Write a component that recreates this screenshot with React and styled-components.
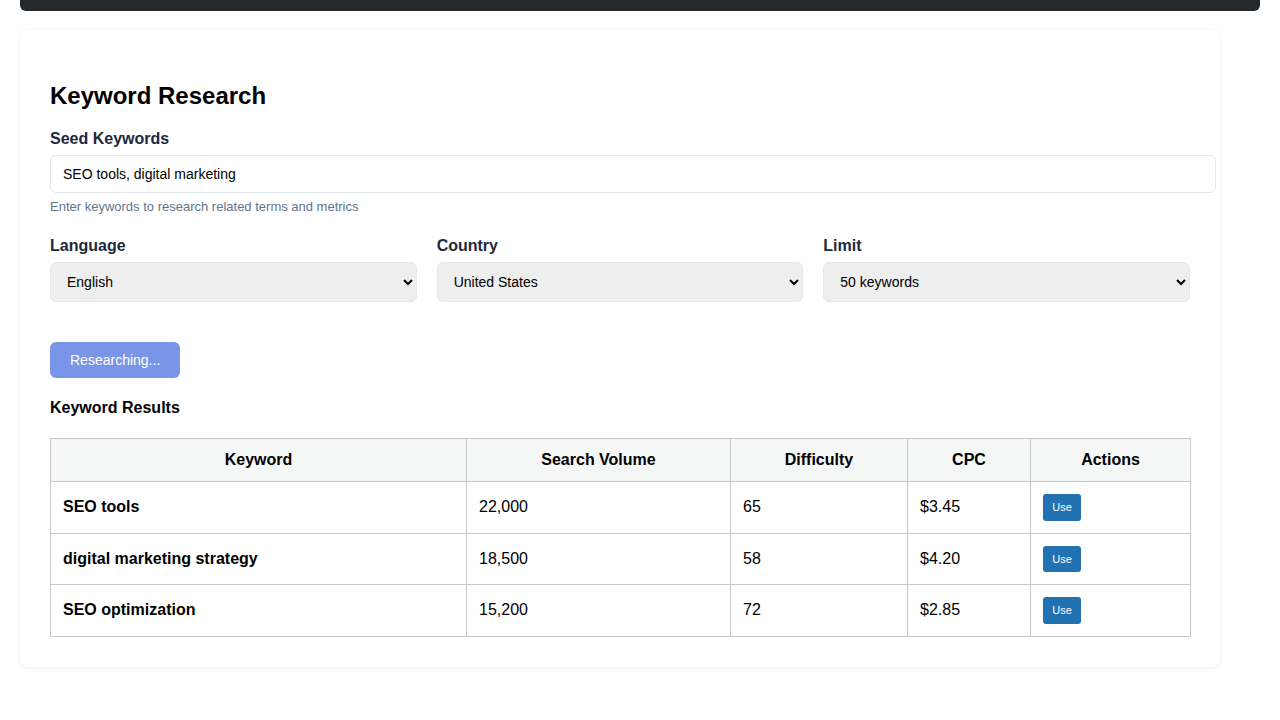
import React from "react";
import styled, { createGlobalStyle } from "styled-components";

const Global = createGlobalStyle`
  * { box-sizing: content-box; }
  html, body { margin: 0; padding: 0; background: #fff; }
  body { font-family: "Liberation Sans", Arial, sans-serif; color: #000; }
`;

const Page = styled.div`
  padding: 0 20px 20px;
`;

const TopBar = styled.div`
  height: 11px;
  background: #23282d;
  border-radius: 0 0 6px 6px;
`;

const Card = styled.div`
  width: 1140px;
  margin-top: 19px;
  padding: 30px;
  background: #fff;
  border-radius: 8px;
  box-shadow: 0 1px 4px rgba(0, 0, 0, 0.08);
`;

const Title = styled.h2`
  font-size: 24px;
  font-weight: 700;
  margin: 22px 0 19px;
  line-height: 28px;
`;

const Label = styled.label`
  display: block;
  font-size: 16px;
  font-weight: 700;
  color: #1e293b;
  line-height: 18px;
  padding-top: 1px;
  margin-bottom: 7px;
`;

const TextInput = styled.input`
  display: block;
  width: 100%;
  padding: 10px 12px;
  font-family: "Liberation Sans", Arial, sans-serif;
  font-size: 14px;
  line-height: 16px;
  height: 16px;
  border: 1px solid #e2e8f0;
  border-radius: 6px;
  color: #000;
  background: #fff;
  outline: none;
`;

const Help = styled.div`
  font-size: 13px;
  line-height: 15px;
  color: #64748b;
  margin-top: 6px;
`;

const Grid = styled.div`
  display: grid;
  grid-template-columns: repeat(3, 1fr);
  gap: 20px;
  margin-top: 22px;
`;

const Field = styled.div`
  display: flex;
  flex-direction: column;
`;

const Select = styled.select`
  box-sizing: border-box;
  width: 100%;
  height: 40px;
  padding: 0 10px 0 12px;
  font-family: "Liberation Sans", Arial, sans-serif;
  font-size: 14px;
  color: #000;
  background: #eeeeee;
  border: 1px solid #e2e8f0;
  border-radius: 6px;
`;

const Button = styled.button`
  display: block;
  margin-top: 40px;
  padding: 10px 20px;
  font-family: "Liberation Sans", Arial, sans-serif;
  font-size: 14px;
  line-height: 16px;
  color: #fff;
  background: #7895e8;
  border: none;
  border-radius: 6px;
`;

const SubTitle = styled.h3`
  font-size: 16px;
  font-weight: 700;
  line-height: 18px;
  margin: 21px 0 21px;
`;

const Table = styled.table`
  width: 1140px;
  border-collapse: collapse;
  table-layout: fixed;
  font-size: 16px;
`;

const Th = styled.th`
  border: 1px solid #c8c8c8;
  background: #f5f6f6;
  padding: 12px;
  font-weight: 700;
  text-align: center;
  line-height: 18px;
  height: 18px;
`;

const Td = styled.td`
  border: 1px solid #c8c8c8;
  padding: 12px;
  line-height: 18px;
  height: 26.6px;
  font-weight: ${(p) => (p.$bold ? 700 : 400)};
  text-align: left;
`;

const UseButton = styled.button`
  display: block;
  width: 38px;
  height: 26.6px;
  padding: 0;
  font-family: "Liberation Sans", Arial, sans-serif;
  font-size: 11px;
  color: #fff;
  background: #2271b1;
  border: none;
  border-radius: 3px;
`;

const rows = [
  { k: "SEO tools", v: "22,000", d: 65, c: "$3.45" },
  { k: "digital marketing strategy", v: "18,500", d: 58, c: "$4.20" },
  { k: "SEO optimization", v: "15,200", d: 72, c: "$2.85" },
];

export default function App() {
  return (
    <Page>
      <Global />
      <TopBar />
      <Card>
        <Title>Keyword Research</Title>
        <Label>Seed Keywords</Label>
        <TextInput defaultValue="SEO tools, digital marketing" />
        <Help>Enter keywords to research related terms and metrics</Help>
        <Grid>
          <Field>
            <Label>Language</Label>
            <Select defaultValue="en">
              <option value="en">English</option>
            </Select>
          </Field>
          <Field>
            <Label>Country</Label>
            <Select defaultValue="us">
              <option value="us">United States</option>
            </Select>
          </Field>
          <Field>
            <Label>Limit</Label>
            <Select defaultValue="50">
              <option value="50">50 keywords</option>
            </Select>
          </Field>
        </Grid>
        <Button>Researching...</Button>
        <SubTitle>Keyword Results</SubTitle>
        <Table>
          <colgroup>
            <col style={{ width: 416 }} />
            <col style={{ width: 264 }} />
            <col style={{ width: 177 }} />
            <col style={{ width: 123 }} />
            <col style={{ width: 160 }} />
          </colgroup>
          <thead>
            <tr>
              <Th>Keyword</Th>
              <Th>Search Volume</Th>
              <Th>Difficulty</Th>
              <Th>CPC</Th>
              <Th>Actions</Th>
            </tr>
          </thead>
          <tbody>
            {rows.map((r) => (
              <tr key={r.k}>
                <Td $bold>{r.k}</Td>
                <Td>{r.v}</Td>
                <Td>{r.d}</Td>
                <Td>{r.c}</Td>
                <Td>
                  <UseButton>Use</UseButton>
                </Td>
              </tr>
            ))}
          </tbody>
        </Table>
      </Card>
    </Page>
  );
}
